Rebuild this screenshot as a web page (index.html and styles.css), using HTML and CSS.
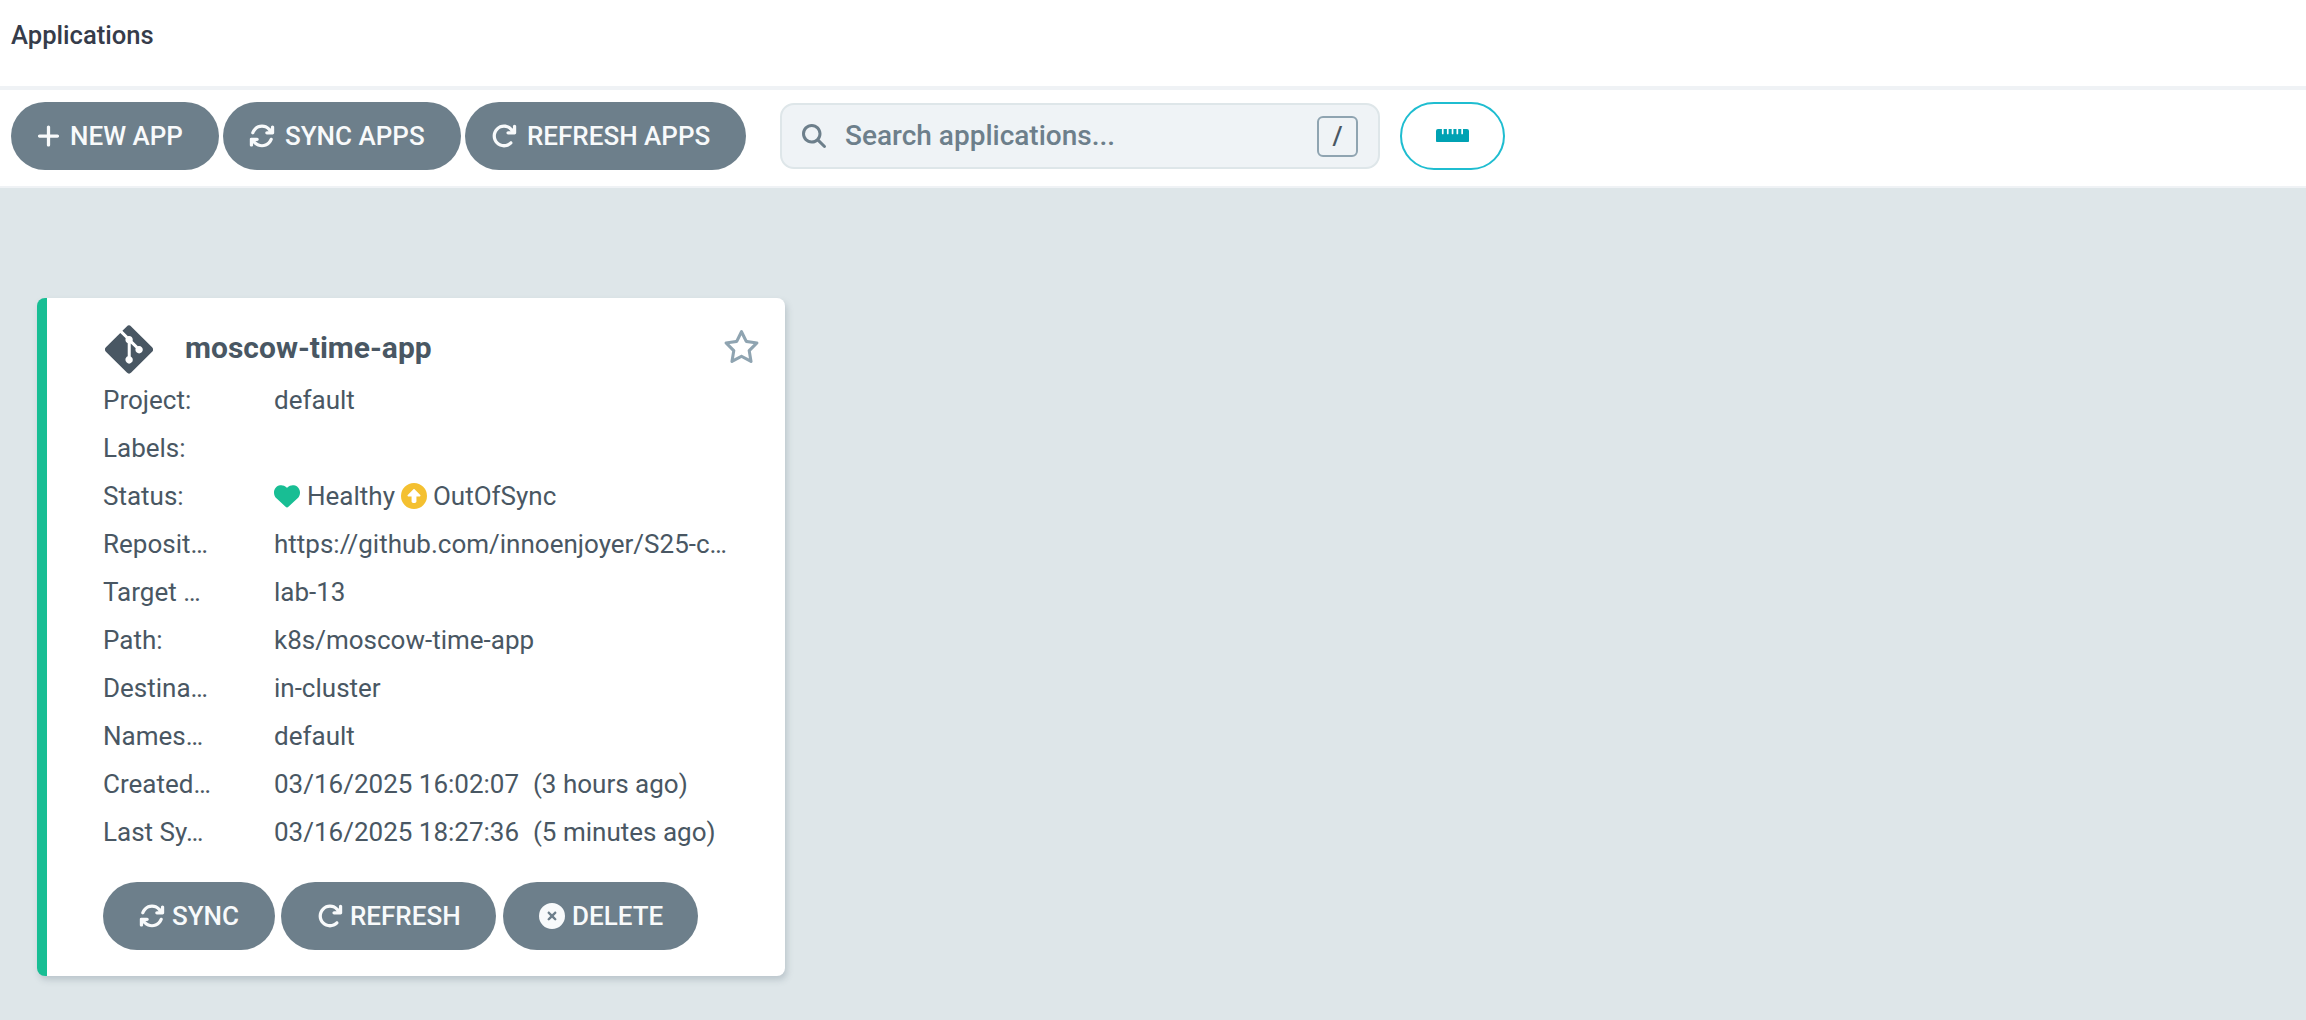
FILE: index.html
```html
<!DOCTYPE html>
<html lang="en">
<head>
<meta charset="utf-8">
<title>Applications</title>
<link rel="stylesheet" href="styles.css">
</head>
<body>
<svg class="sprite" aria-hidden="true">
  <symbol id="plus" viewBox="0 0 448 512"><path d="M256 80c0-17.7-14.3-32-32-32s-32 14.3-32 32V224H48c-17.7 0-32 14.3-32 32s14.3 32 32 32H192V432c0 17.7 14.3 32 32 32s32-14.3 32-32V288H400c17.7 0 32-14.3 32-32s-14.3-32-32-32H256V80z"/></symbol>
  <symbol id="sync" viewBox="0 0 512 512"><path d="M105.1 202.6c7.7-21.8 20.2-42.3 37.8-59.8c62.5-62.5 163.8-62.5 226.3 0L386.3 160H352c-17.7 0-32 14.3-32 32s14.3 32 32 32H463.5h.4c17.7 0 32-14.3 32-32V80c0-17.7-14.3-32-32-32s-32 14.3-32 32v35.2L414.4 97.6c-87.5-87.5-229.3-87.5-316.8 0C73.2 122 55.6 150.7 44.8 181.4c-5.9 16.7 2.9 34.9 19.5 40.8s34.9-2.9 40.8-19.5zM39 289.3c-5 1.5-9.8 4.2-13.7 8.2c-4 4-6.7 8.8-8.1 14c-.3 1.2-.6 2.5-.8 3.8c-.3 1.7-.4 3.4-.4 5.1V432c0 17.7 14.3 32 32 32s32-14.3 32-32V396.9l17.6 17.5c87.5 87.4 229.3 87.4 316.7 0c24.4-24.4 42.1-53.1 52.9-83.7c5.9-16.7-2.9-34.9-19.5-40.8s-34.9 2.9-40.8 19.5c-7.7 21.8-20.2 42.3-37.8 59.8c-62.5 62.5-163.8 62.5-226.3 0l-.1-.1L125.6 352H160c17.7 0 32-14.3 32-32s-14.3-32-32-32H48.4c-1.6 0-3.2 .1-4.8 .3s-3.1 .5-4.6 1z"/></symbol>
  <symbol id="refresh" viewBox="0 0 512 512"><path d="M386.3 160H336c-17.7 0-32 14.3-32 32s14.3 32 32 32H464c17.7 0 32-14.3 32-32V64c0-17.7-14.3-32-32-32s-32 14.3-32 32v51.2L414.4 97.6c-87.5-87.5-229.3-87.5-316.8 0s-87.5 229.3 0 316.8s229.3 87.5 316.8 0c12.5-12.5 12.5-32.8 0-45.3s-32.8-12.5-45.3 0c-62.5 62.5-163.8 62.5-226.3 0s-62.5-163.8 0-226.3s163.8-62.5 226.3 0L386.3 160z"/></symbol>
  <symbol id="xmark" viewBox="0 0 512 512"><path d="M256 512A256 256 0 1 0 256 0a256 256 0 1 0 0 512zM175 175c9.4-9.4 24.6-9.4 33.9 0l47 47 47-47c9.4-9.4 24.6-9.4 33.9 0s9.4 24.6 0 33.9l-47 47 47 47c9.4 9.4 9.4 24.6 0 33.9s-24.6 9.4-33.9 0l-47-47-47 47c-9.4 9.4-24.6 9.4-33.9 0s-9.4-24.6 0-33.9l47-47-47-47c-9.4-9.4-9.4-24.6 0-33.9z"/></symbol>
</svg>

<header class="topbar"><h1 class="topbar-title">Applications</h1></header>

<div class="toolbar">
  <div class="toolbar-actions">
    <button class="btn btn-new"><svg class="icon icon-plus"><use href="#plus"/></svg><span>NEW APP</span></button>
    <button class="btn btn-sync-apps"><svg class="icon"><use href="#sync"/></svg><span>SYNC APPS</span></button>
    <button class="btn btn-refresh-apps"><svg class="icon"><use href="#refresh"/></svg><span>REFRESH APPS</span></button>
  </div>
  <div class="search">
    <svg class="search-icon" viewBox="0 0 512 512"><path d="M416 208c0 45.900-14.900 88.300-40 122.700L502.600 457.400c12.500 12.500 12.500 32.800 0 45.300s-32.800 12.500-45.300 0L330.700 376c-34.400 25.200-76.800 40-122.700 40C93.100 416 0 322.900 0 208S93.100 0 208 0S416 93.100 416 208zM208 352a144 144 0 1 0 0-288 144 144 0 1 0 0 288z"/></svg>
    <span class="search-text">Search applications...</span>
    <kbd class="search-key">/</kbd>
  </div>
  <button class="ruler-btn" aria-label="Health status bar">
    <svg class="ruler" viewBox="0 0 33 13.500"><path d="M2 0H5.900V4.500a.6 .6 0 0 0 1.700 0V0H10.900V4.500a.6 .6 0 0 0 1.700 0V0H15.700V4.500a.6 .6 0 0 0 1.700 0V0H20.500V4.500a.6 .6 0 0 0 1.700 0V0H25.300V4.500a.6 .6 0 0 0 1.700 0V0H31a2 2 0 0 1 2 2V11.500a2 2 0 0 1-2 2H2a2 2 0 0 1-2-2V2a2 2 0 0 1 2-2z"/></svg>
  </button>
</div>

<main class="content">
  <article class="card">
    <div class="card-head">
      <svg class="git" viewBox="0 0 448 512"><path d="M439.550 236.050L244 40.450a28.870 28.870 0 0 0-40.810 0l-40.660 40.630 51.520 51.520c27.060-9.140 52.680 16.770 43.390 43.680l49.660 49.660c34.230-11.800 61.180 31 35.470 56.690-26.490 26.490-70.210-2.870-56-37.340L240.220 199v121.850c25.300 12.540 22.260 41.850 9.080 55a34.340 34.340 0 0 1-48.550 0c-17.570-17.600-11.070-46.910 11.250-56v-123c-20.800-8.510-24.600-30.740-18.640-45L142.570 101 8.450 235.140a28.860 28.860 0 0 0 0 40.810l195.610 195.600a28.860 28.860 0 0 0 40.800 0l194.690-194.690a28.860 28.860 0 0 0 0-40.810z"/></svg>
      <h2 class="card-title">moscow-time-app</h2>
      <svg class="star" viewBox="0 0 576 512"><path d="M287.900 0c9.200 0 17.600 5.200 21.600 13.500l68.600 141.300 153.200 22.600c9 1.300 16.500 7.600 19.300 16.300s.5 18.100-5.900 24.500L433.600 328.400l26.200 155.600c1.500 9-2.200 18.100-9.700 23.500s-17.300 6-25.300 1.700l-137-73.200L151 509.100c-8.100 4.300-17.900 3.700-25.300-1.700s-11.200-14.500-9.700-23.500l26.200-155.600L31.100 218.200c-6.500-6.400-8.700-15.900-5.900-24.500s10.300-14.900 19.300-16.300l153.200-22.600L266.300 13.500C270.400 5.200 278.700 0 287.900 0zm0 79L235.400 187.200c-3.500 7.100-10.200 12.100-18.100 13.300L99 217.900 184.900 303c5.500 5.500 8.100 13.300 6.800 21L171.400 443.700l105.200-56.200c7.100-3.800 15.600-3.800 22.600 0l105.200 56.200L384.200 324.100c-1.300-7.700 1.200-15.500 6.800-21l85.900-85.100L358.600 200.500c-7.800-1.200-14.600-6.100-18.100-13.300L287.900 79z"/></svg>
    </div>
    <dl class="rows">
      <dt>Project:</dt><dd>default</dd>
      <dt>Labels:</dt><dd></dd>
      <dt>Status:</dt>
      <dd class="status">
        <svg class="status-icon heart" viewBox="0 0 512 512"><path d="M47.600 300.400L228.300 469.100c7.500 7 17.400 10.900 27.700 10.900s20.200-3.900 27.700-10.900L464.400 300.400c30.400-28.300 47.600-68 47.600-109.500v-5.800c0-69.900-50.500-129.500-119.400-141C347 36.500 300.600 51.400 268 84L256 96 244 84c-32.600-32.600-79-47.500-124.600-39.900C50.500 55.600 0 115.200 0 185.100v5.800c0 41.500 17.200 81.200 47.600 109.500z"/></svg>
        <span class="healthy">Healthy</span>
        <svg class="status-icon outofsync" viewBox="0 0 512 512"><path d="M256 0a256 256 0 1 0 0 512A256 256 0 1 0 256 0zm11.300 124.700l112 112c4.600 4.600 5.900 11.500 3.500 17.400s-8.300 9.900-14.800 9.900H304v96c0 17.700-14.300 32-32 32H240c-17.700 0-32-14.300-32-32V264H144c-6.500 0-12.300-3.900-14.800-9.900s-1.100-12.900 3.500-17.400l112-112c6.200-6.200 16.400-6.200 22.600 0z"/></svg>
        <span>OutOfSync</span>
      </dd>
      <dt>Reposit…</dt><dd>https://github.com/innoenjoyer/S25-c…</dd>
      <dt>Target …</dt><dd>lab-13</dd>
      <dt>Path:</dt><dd>k8s/moscow-time-app</dd>
      <dt>Destina…</dt><dd>in-cluster</dd>
      <dt>Names…</dt><dd>default</dd>
      <dt>Created…</dt><dd>03/16/2025 16:02:07 &nbsp;<span class="ago">(3 hours ago)</span></dd>
      <dt>Last Sy…</dt><dd>03/16/2025 18:27:36 &nbsp;<span class="ago">(5 minutes ago)</span></dd>
    </dl>
    <div class="card-actions">
      <button class="btn btn-sync"><svg class="icon"><use href="#sync"/></svg><span>SYNC</span></button>
      <button class="btn btn-refresh"><svg class="icon"><use href="#refresh"/></svg><span>REFRESH</span></button>
      <button class="btn btn-delete"><svg class="icon"><use href="#xmark"/></svg><span>DELETE</span></button>
    </div>
  </article>
</main>
</body>
</html>
```
FILE: styles.css
```css
* { box-sizing: border-box; }

body {
  margin: 0;
  height: 1020px;
  display: flex;
  flex-direction: column;
  overflow: hidden;
  background: #fff;
  color: #495763;
  font-family: Roboto, "Liberation Sans", sans-serif;
  font-size: 26px;
}

h1, h2, dl, dd { margin: 0; }
svg { display: block; flex: none; fill: currentColor; }
.sprite { position: absolute; width: 0; height: 0; }

.topbar {
  flex: none;
  height: 90px;
  padding: 15px 11px 0;
  border-bottom: 4px solid #eff2f5;
}
.topbar-title { font-size: 25.6px; line-height: 41px; font-weight: 500; color: #363c4a; }

.toolbar {
  flex: none;
  height: 98px;
  display: flex;
  align-items: flex-start;
  padding: 12px 11px 0;
  border-bottom: 2px solid #eff2f5;
}
.toolbar-actions { display: flex; gap: 4px; margin-right: 34px; }

.btn {
  display: flex;
  align-items: center;
  height: 68px;
  padding: 0;
  border: 0;
  border-radius: 34px;
  background: #6d7f8b;
  color: #f8fafb;
  font: 500 26px/68px Roboto, "Liberation Sans", sans-serif;
  white-space: nowrap;
}
.icon { width: 26px; height: 26px; margin-top: -1px; }
.icon-plus { width: 23px; }
.toolbar .btn { gap: 10px; padding-left: 26px; }
.btn-new { width: 208px; }
.btn-sync-apps { width: 238px; }
.btn-refresh-apps { width: 281px; }

.search {
  display: flex;
  align-items: center;
  width: 600px;
  height: 66px;
  margin: 1px 20px 0 0;
  padding: 0 20px;
  border: 2px solid #dee6e9;
  border-radius: 14px;
  background: #eff3f6;
  color: #6d7f8b;
}
.search-icon { width: 24px; height: 24px; }
.search-text { flex: 1; margin-left: 19px; font-size: 28px; font-weight: 500; line-height: 62px; }
.search-key {
  width: 41px;
  height: 41px;
  border: 2px solid #8fa4b1;
  border-radius: 6px;
  color: #495763;
  font: 500 26px/37px Roboto, "Liberation Sans", sans-serif;
  text-align: center;
}
.ruler-btn {
  display: flex;
  align-items: center;
  justify-content: center;
  width: 105px;
  height: 68px;
  padding: 0 0 1px;
  border: 2px solid #1fbdd0;
  border-radius: 34px;
  background: #fff;
  color: #00a2b3;
}
.ruler { width: 33px; height: 13.5px; }

.content { flex: 1; padding: 110px 37px 0; background: #dee6e9; }
.card {
  width: 748px;
  height: 678px;
  padding: 19px 27px 0 56px;
  border-left: 10px solid #18be94;
  border-radius: 8px;
  background: #fff;
  box-shadow: 2px 4px 6px rgba(109, 127, 139, .3);
}
.card-head { display: flex; align-items: center; height: 65px; padding-left: 2px; }
.git { width: 48px; height: 55px; }
.card-title { flex: 1; margin-left: 32px; padding-bottom: 3px; font-size: 30px; font-weight: 700; line-height: 60px; }
.star { width: 37px; height: 33px; margin: -7px -2px 0 0; color: #8fa4b1; }

.rows {
  display: grid;
  grid-template-columns: 171px 1fr;
  grid-auto-rows: 48px;
  line-height: 36px;
  white-space: nowrap;
}
.ago { margin-left: 1px; }
.status { display: flex; height: 36px; align-items: center; }
.status-icon { width: 26px; height: 26px; }
.heart { color: #18be94; }
.healthy { margin: 0 6px 0 7px; }
.outofsync { margin-right: 6px; color: #f4c030; }

.card-actions { display: flex; gap: 6px; margin-top: 20px; }
.card-actions .btn { gap: 7px; padding-left: 36px; }
.btn-sync { width: 172px; }
.btn-refresh { width: 215px; }
.btn-delete { width: 195px; margin-left: 1px; }
```
